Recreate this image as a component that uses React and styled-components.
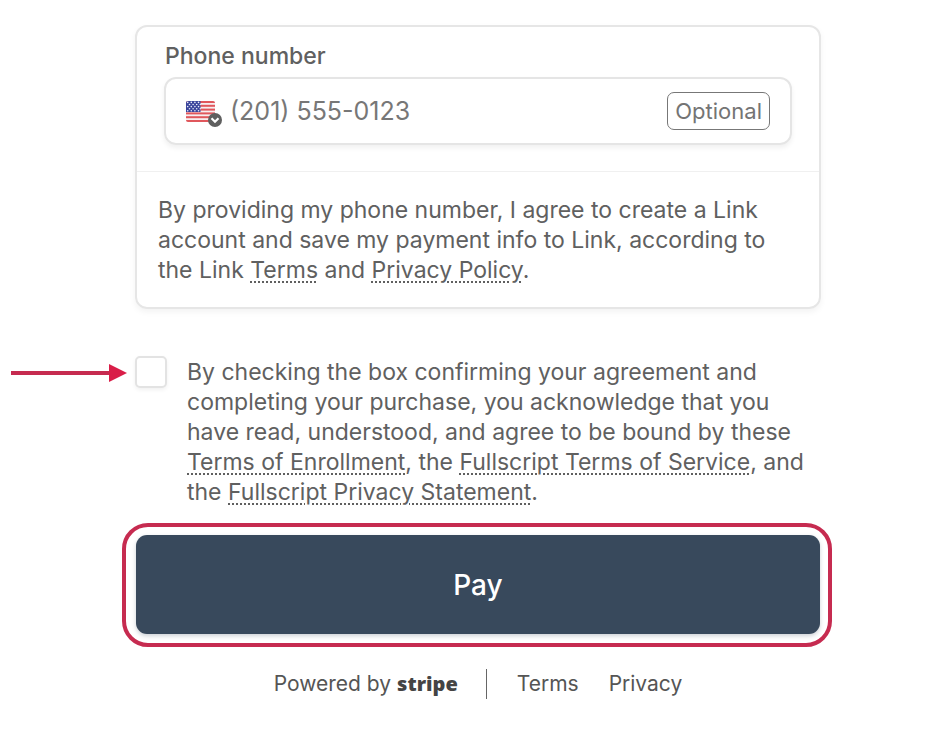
import React from "react";
import styled, { createGlobalStyle } from "styled-components";

const GlobalStyle = createGlobalStyle`
  *, *::before, *::after { box-sizing: border-box; }
  body {
    margin: 0;
    background: #fff;
    color: #606060;
    font-family: Inter, "Liberation Sans", sans-serif;
    font-size: 23px;
    line-height: 30px;
  }
`;

const Page = styled.main`
  padding: 25px 119px 48px 135px;
`;

const Card = styled.section`
  border: 2px solid #e6e6e6;
  border-radius: 12px;
  box-shadow: 0 3px 6px rgba(0, 0, 0, 0.05);
`;

const PhoneSection = styled.div`
  padding: 14px 27px 26px;
  border-bottom: 1px solid #f0f0f0;
`;

const FieldLabel = styled.label`
  display: block;
  padding: 0 1px;
  margin-bottom: 6px;
  font-weight: 500;
`;

const PhoneField = styled.div`
  display: flex;
  align-items: center;
  height: 68px;
  padding: 0 20px;
  border: 2px solid #e5e5e5;
  border-radius: 12px;
  box-shadow: 0 3px 5px rgba(0, 0, 0, 0.06);
`;

const CountryButton = styled.button`
  flex: none;
  display: flex;
  padding: 0;
  border: 0;
  background: none;
  cursor: pointer;
`;

const PhoneInput = styled.input`
  flex: 1;
  min-width: 0;
  padding: 0;
  margin-left: 7px;
  border: 0;
  outline: 0;
  background: none;
  color: #555;
  font: inherit;
  font-size: 25px;
  &::placeholder { color: #777; opacity: 1; }
`;

const OptionalTag = styled.span`
  flex: none;
  padding: 3px 7px;
  border: 1px solid #777;
  border-radius: 7px;
  color: #747474;
  font-size: 22px;
`;

const CardNote = styled.p`
  margin: 0;
  padding: 23px 21px 22px;
`;

const TextLink = styled.a`
  color: inherit;
  text-decoration: underline dotted 2px;
  text-underline-offset: 3px;
`;

const Consent = styled.div`
  position: relative;
  display: flex;
  align-items: flex-start;
  gap: 20px;
  margin-top: 47px;
`;

const ConsentLabel = styled.label`
  padding-top: 1px;
`;

const Checkbox = styled.input`
  appearance: none;
  flex: none;
  width: 32px;
  height: 32px;
  margin: 0;
  border: 2px solid #e3e3e3;
  border-radius: 5px;
  background: #fff;
  box-shadow: 0 2px 4px rgba(0, 0, 0, 0.06);
  &:checked { background: #38495c; }
`;

const Pointer = styled.svg`
  position: absolute;
  right: 100%;
  top: 7px;
  margin-right: 8px;
`;

const PayHighlight = styled.div`
  margin: 16px -11px 0 -13px;
  padding: 8px 8px 9px 10px;
  border: 4px solid #c62b50;
  border-radius: 26px;
`;

const PayButton = styled.button`
  display: block;
  width: 100%;
  height: 99px;
  border: 0;
  border-radius: 11px;
  background: #38495c;
  box-shadow: 0 2px 4px rgba(56, 73, 92, 0.25);
  color: #fff;
  font: inherit;
  font-size: 28px;
  font-weight: 500;
  cursor: pointer;
`;

const Footer = styled.footer`
  display: flex;
  justify-content: center;
  align-items: center;
  margin-top: 22px;
  color: #555;
  font-size: 21px;
`;

const PoweredBy = styled.span`
  display: flex;
  align-items: baseline;
  gap: 6px;
  padding-right: 28px;
  border-right: 1px solid #666;
`;

const Wordmark = styled.span`
  color: #444;
  font-family: "Open Sans", "Noto Sans", sans-serif;
  font-size: 20px;
  font-weight: 800;
  line-height: 24px;
`;

const FooterLink = styled.a`
  margin-left: 30px;
  color: inherit;
  text-decoration: none;
`;

const STRIPE_ROWS = [0, 1, 2, 3, 4, 5];
const STAR_ROWS = [0, 1, 2, 3, 4];
const STAR_COLUMNS = [0, 1, 2, 3];

function FlagIcon() {
  return (
    <svg width="37" height="32" viewBox="0 0 37 32" aria-hidden="true">
      <defs>
        <clipPath id="flag-shape">
          <rect x="0" y="6" width="29" height="21" rx="2" />
        </clipPath>
      </defs>
      <g clipPath="url(#flag-shape)">
        <rect y="6" width="29" height="21" fill="#f7eef0" />
        {STRIPE_ROWS.map((row) => (
          <rect key={row} y={6 + row * 3.8} width="29" height="2" fill="#e0575c" />
        ))}
        <rect y="6" width="14.5" height="11" fill="#39449b" />
        {STAR_ROWS.map((row) =>
          STAR_COLUMNS.map((col) => (
            <circle
              key={`${row}-${col}`}
              cx={1.7 + col * 3.6 + (row % 2) * 1.8}
              cy={7.4 + row * 2.1}
              r="0.8"
              fill="#e8eaf8"
            />
          ))
        )}
      </g>
      <circle cx="29" cy="25" r="7" fill="#5f5f5f" />
      <path d="M25.5 23.3 29 26.8l3.5-3.5" fill="none" stroke="#fff" strokeWidth="2.2" />
    </svg>
  );
}

export default function App() {
  return (
    <>
      <GlobalStyle />
      <Page>
        <Card>
          <PhoneSection>
            <FieldLabel htmlFor="phone">Phone number</FieldLabel>
            <PhoneField>
              <CountryButton type="button" aria-label="Select country">
                <FlagIcon />
              </CountryButton>
              <PhoneInput id="phone" type="tel" placeholder="(201) 555-0123" />
              <OptionalTag>Optional</OptionalTag>
            </PhoneField>
          </PhoneSection>
          <CardNote>
            By providing my phone number, I agree to create a Link account and save my payment
            info to Link, according to the Link <TextLink href="#link-terms">Terms</TextLink> and{" "}
            <TextLink href="#link-privacy">Privacy Policy</TextLink>.
          </CardNote>
        </Card>

        <Consent>
          <Pointer width="116" height="20" viewBox="0 0 116 20" aria-hidden="true">
            <path d="M0 10H100" stroke="#c62b50" strokeWidth="4" />
            <path d="M98 1 116 10 98 19Z" fill="#d91e48" />
          </Pointer>
          <Checkbox id="consent" type="checkbox" />
          <ConsentLabel htmlFor="consent">
            By checking the box confirming your agreement and completing your purchase, you
            acknowledge that you have read, understood, and agree to be bound by these{" "}
            <TextLink href="#enrollment">Terms of Enrollment</TextLink>, the{" "}
            <TextLink href="#service">Fullscript Terms of Service</TextLink>, and the{" "}
            <TextLink href="#privacy-statement">Fullscript Privacy Statement</TextLink>.
          </ConsentLabel>
        </Consent>

        <PayHighlight>
          <PayButton type="button">Pay</PayButton>
        </PayHighlight>

        <Footer>
          <PoweredBy>
            Powered by <Wordmark>stripe</Wordmark>
          </PoweredBy>
          <FooterLink href="#terms">Terms</FooterLink>
          <FooterLink href="#privacy">Privacy</FooterLink>
        </Footer>
      </Page>
    </>
  );
}
